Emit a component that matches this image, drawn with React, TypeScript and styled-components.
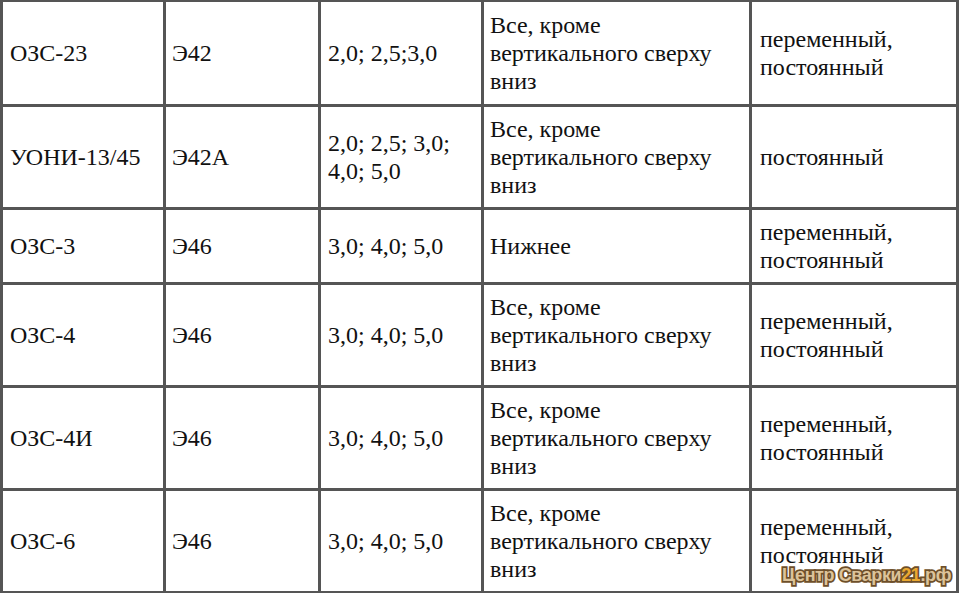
import styled, { createGlobalStyle } from 'styled-components';

const GlobalStyle = createGlobalStyle`
  body {
    margin: 0;
    background: #fff;
    font-family: serif;
  }
`;

const Page = styled.div`
  position: relative;
  width: 959px;
  height: 593px;
  overflow: hidden;
`;

// separate model with no spacing: the table draws top/left, each cell right/bottom
const Table = styled.table`
  border-collapse: separate;
  border-spacing: 0;
  table-layout: fixed;
  width: 959px;
  margin-top: -1px;
  border-top: 3px solid #555;
  border-left: 3px solid #555;
  font-family: serif;
  font-size: 24px;
  line-height: 28px;
  color: #111;
`;

const Row = styled.tr<{ $h: number }>`
  height: ${(p) => p.$h}px;
`;

const Cell = styled.td<{ $pad: number }>`
  box-sizing: border-box;
  vertical-align: middle;
  padding: 0 2px 0 ${(p) => p.$pad}px;
  border-right: 3px solid #555;
  border-bottom: 3px solid #555;
  white-space: nowrap;
  font-family: serif;
`;

const Watermark = styled.div`
  position: absolute;
  right: 8px;
  bottom: 7px;
  font-family: "Liberation Sans", Arial, sans-serif;
  font-weight: 700;
  font-size: 18px;
  letter-spacing: -0.4px;
  color: #dcc39a;
  -webkit-text-stroke: 3.5px #6e4f2a;
  paint-order: stroke fill;
`;

const Accent = styled.span`
  color: #eaa830;
`;

type RowData = [string, string, string[], string[], string[], number];

const MODE = ['Все, кроме', 'вертикального сверху', 'вниз'];
const CURRENT = ['переменный,', 'постоянный'];

const rows: RowData[] = [
  ['ОЗС-23', 'Э42', ['2,0; 2,5;3,0'], MODE, CURRENT, 105],
  ['УОНИ-13/45', 'Э42А', ['2,0; 2,5; 3,0;', '4,0; 5,0'], MODE, ['постоянный'], 103],
  ['ОЗС-3', 'Э46', ['3,0; 4,0; 5,0'], ['Нижнее'], CURRENT, 75],
  ['ОЗС-4', 'Э46', ['3,0; 4,0; 5,0'], MODE, CURRENT, 103],
  ['ОЗС-4И', 'Э46', ['3,0; 4,0; 5,0'], MODE, CURRENT, 103],
  ['ОЗС-6', 'Э46', ['3,0; 4,0; 5,0'], MODE, CURRENT, 103],
];

const WIDTHS = [163, 155, 163, 268, 207];

function Lines({ lines }: { lines: string[] }) {
  return (
    <>
      {lines.map((l, i) => (
        <span key={l}>
          {i > 0 && <br />}
          {l}
        </span>
      ))}
    </>
  );
}

export default function App() {
  return (
    <Page>
      <GlobalStyle />
      <Table>
        <colgroup>
          {WIDTHS.map((w, i) => (
            <col key={i} style={{ width: w }} />
          ))}
        </colgroup>
        <tbody>
          {rows.map((r) => (
            <Row key={r[0]} $h={r[5]}>
              <Cell $pad={7}>{r[0]}</Cell>
              <Cell $pad={6}>{r[1]}</Cell>
              <Cell $pad={7}>
                <Lines lines={r[2]} />
              </Cell>
              <Cell $pad={6}>
                <Lines lines={r[3]} />
              </Cell>
              <Cell $pad={8}>
                <Lines lines={r[4]} />
              </Cell>
            </Row>
          ))}
        </tbody>
      </Table>
      <Watermark>
        Центр Сварки<Accent>21</Accent>.рф
      </Watermark>
    </Page>
  );
}
